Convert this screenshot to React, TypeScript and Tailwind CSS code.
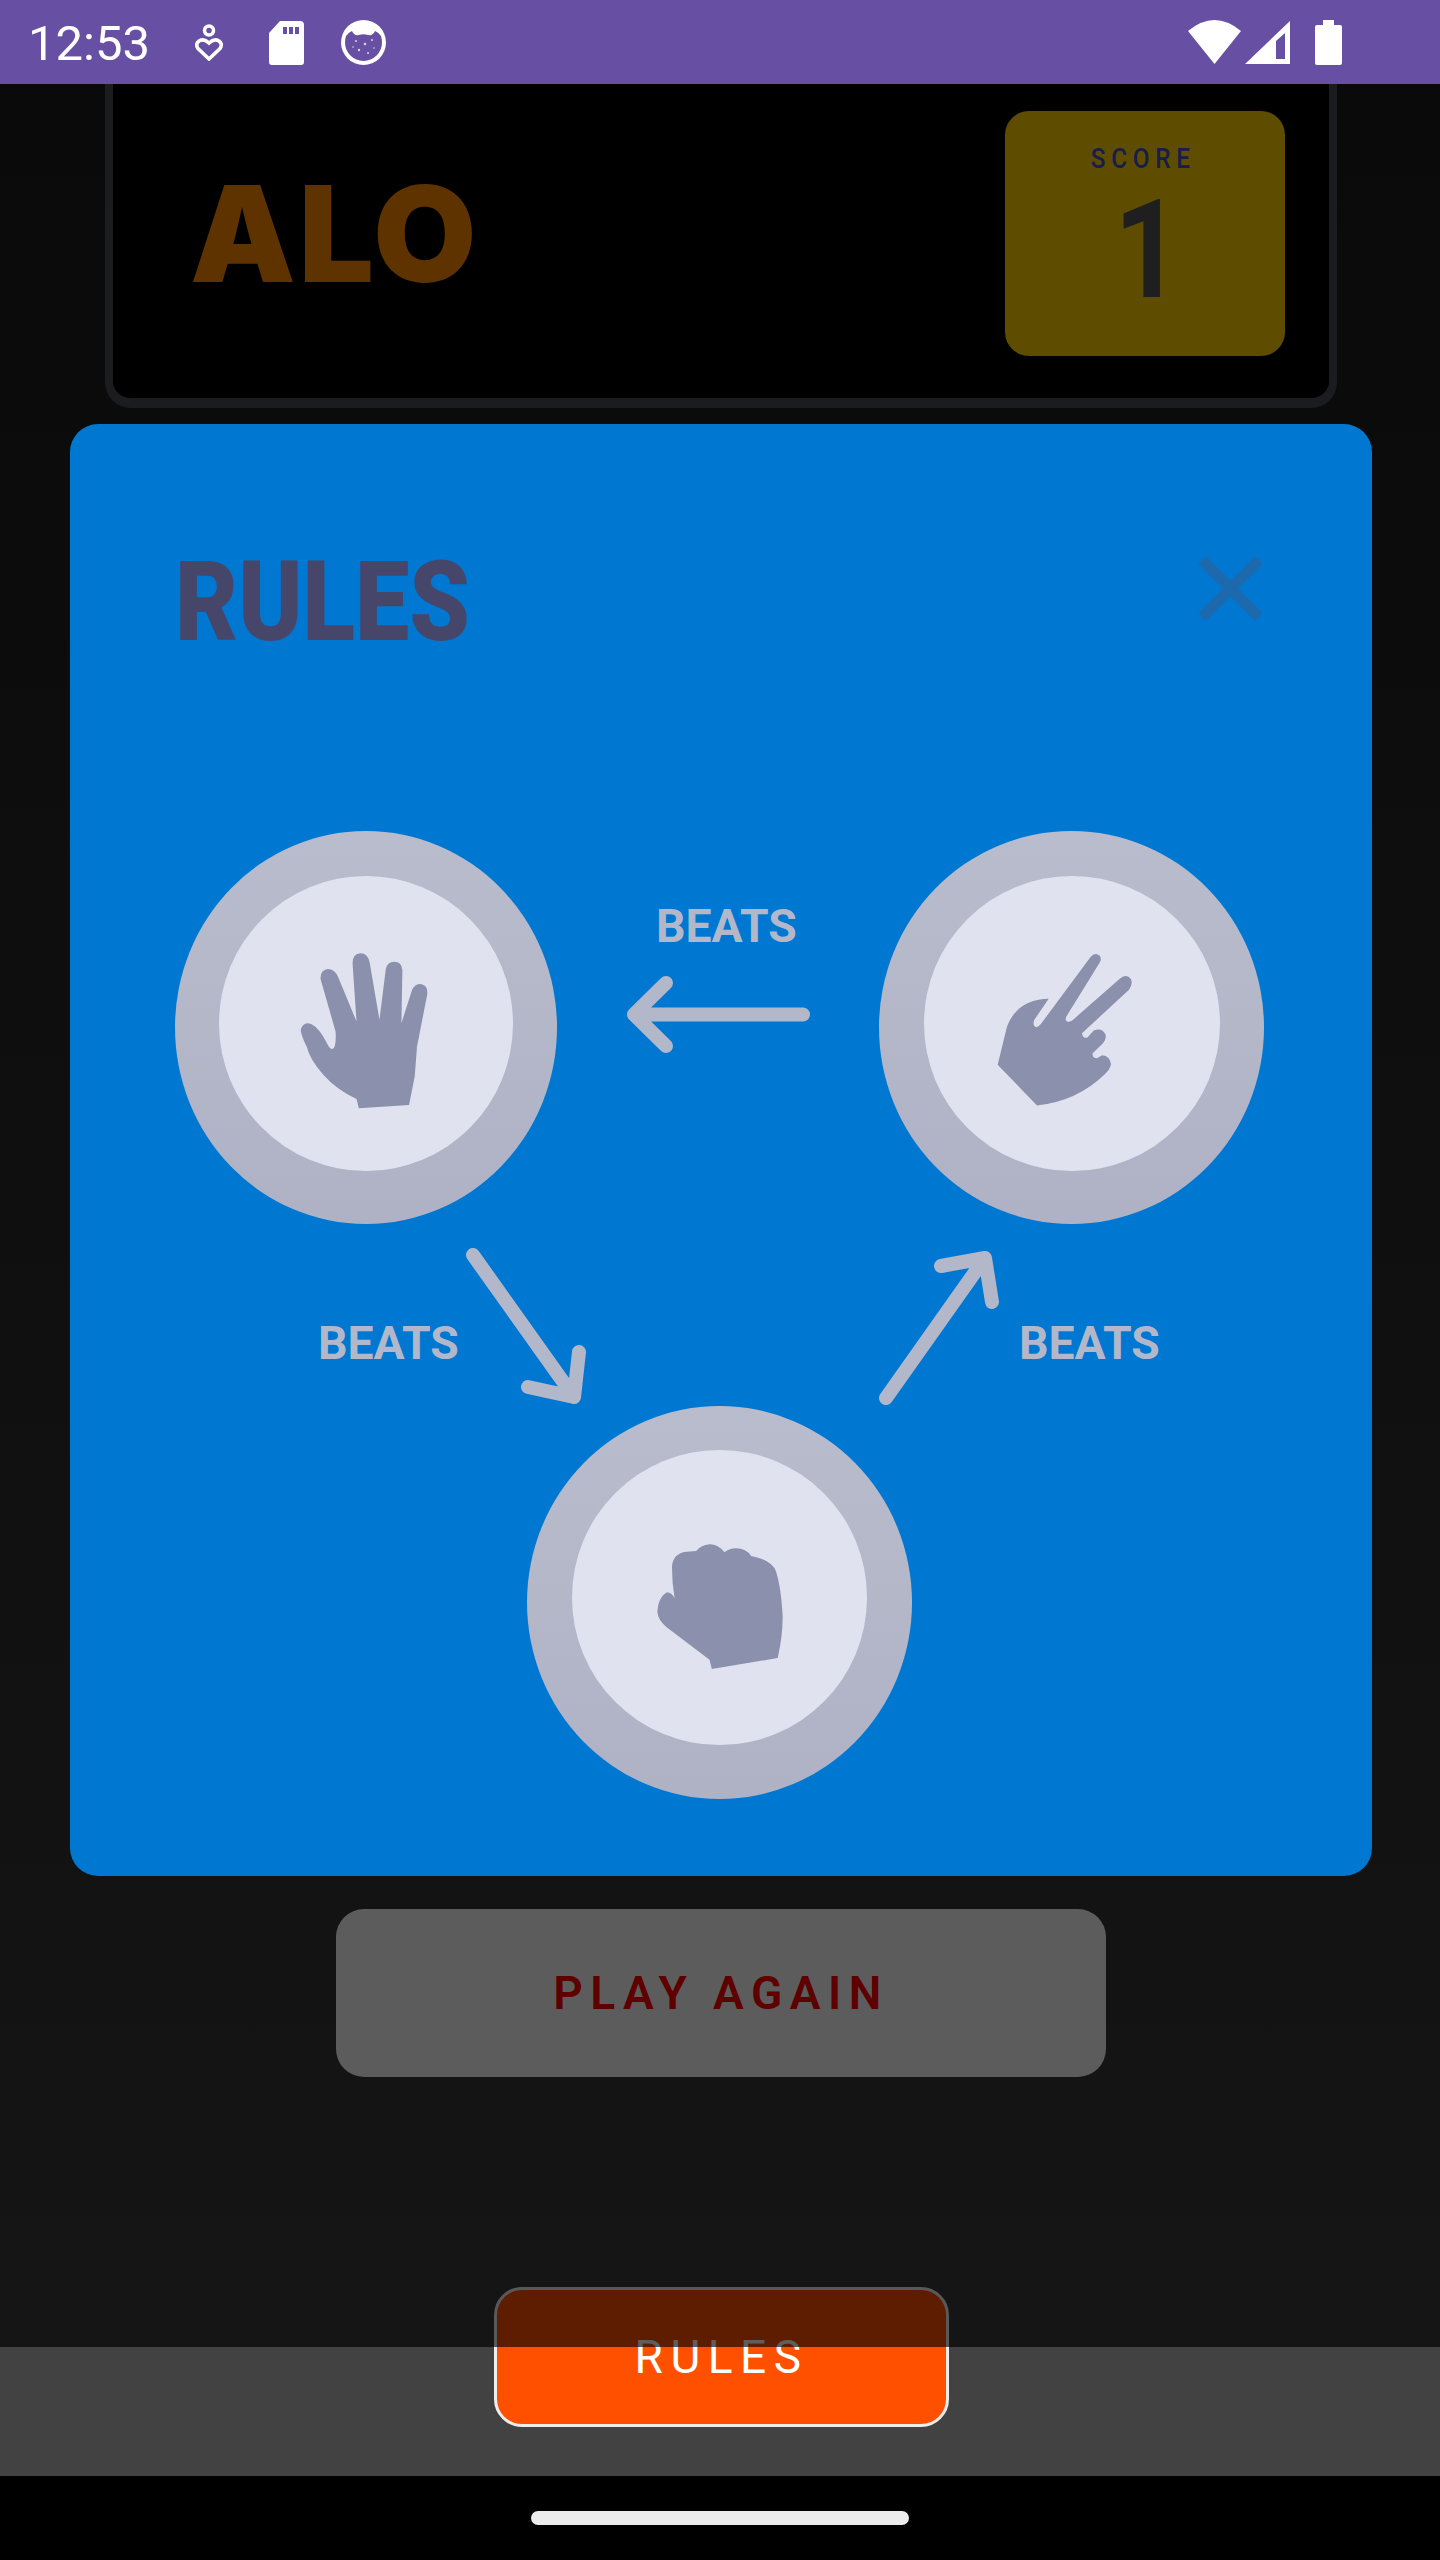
import React from "react";

function PaperIcon() {
  return (
    <svg viewBox="420 400 385 467" className="w-[128px] h-[156px] ml-[-4px] mt-[15px] fill-[#8b90ad]">
      <path d="M597 866 L748 856 L765 770 L772 680 L803 522 Q805 495 783 492 Q765 492 757 510 L725 610 L728 450 Q726 425 703 425 Q682 425 678 448 L659 600 L630 430 Q625 400 602 400 Q578 402 578 430 L590 605 L535 472 Q525 447 503 447 Q480 450 482 478 L527 635 Q530 690 515 688 Q508 685 500 668 Q478 625 455 613 Q430 602 422 630 Q424 650 440 680 Q450 720 490 765 Q530 810 590 838 Z" />
    </svg>
  );
}

function ScissorsIcon() {
  return (
    <svg viewBox="410 400 405 458" className="w-[135px] h-[153px] ml-[-15px] mt-[12px] fill-[#8b90ad]">
      <path d="M530 857 L412 735 L440 620 Q470 540 565 537 L522 600 Q515 618 528 622 Q535 622 542 612 L690 412 Q705 395 718 408 Q726 418 716 432 L618 590 Q612 605 625 606 Q632 606 640 598 L780 475 Q800 460 812 478 Q818 495 806 510 L665 640 Q668 658 682 652 L700 632 Q725 622 736 645 Q738 660 728 670 L697 700 Q695 716 710 715 L725 706 Q750 708 752 735 Q748 750 735 762 Q650 845 530 857 Z" />
    </svg>
  );
}

function RockIcon() {
  return (
    <svg viewBox="443 462 377 376" className="w-[126px] h-[125px] ml-[1px] mt-[17px] fill-[#8b90ad]">
      <path d="M607 838 L805 805 Q820 740 820 680 Q815 590 800 545 Q790 510 725 498 Q710 475 680 475 Q660 475 645 487 Q625 462 600 463 Q575 465 560 483 L530 485 Q490 490 487 530 Q487 580 495 625 Q485 605 470 608 Q445 625 443 665 Q445 690 470 712 L600 810 Z" />
    </svg>
  );
}

function Token({ children, className }: { children: React.ReactNode; className: string }) {
  return (
    <div className={`rounded-[50%] bg-gradient-to-b from-[#b9bccc] to-[#afb2c5] ${className}`}>
      <div className="w-full h-full rounded-[50%] bg-[#e0e3ef] flex items-center justify-center">{children}</div>
    </div>
  );
}

function Beats({ className }: { className: string }) {
  return (
    <div className={`w-[140px] origin-left scale-x-[0.985] text-[47px] leading-none font-bold whitespace-nowrap text-[#b3b7ca] ${className}`}>BEATS</div>
  );
}

function StatusBar() {
  return (
    <div className="h-[84px] bg-[#6750a3] flex items-center text-white">
      <span className="ml-[28px] mt-[3px] text-[49px] leading-none w-[167px]">12:53</span>
      <svg viewBox="0 0 28 37" className="w-[28px] h-[37px] fill-none stroke-white stroke-[3.5]">
        <circle cx="14" cy="6.5" r="4.5" />
        <path d="M14 35 L3 24.5 Q0 20 4 17 Q9 14 14 19 Q19 14 24 17 Q28 20 25 24.5 Z" />
      </svg>
      <svg viewBox="0 0 35 44" className="w-[35px] h-[44px] ml-[46px] mt-[1px] fill-white">
        <path fillRule="evenodd" d="M11 0 H31 Q35 0 35 4 V41 Q35 44 32 44 H3 Q0 44 0 41 V12 Z M14 6 V13 H18 V6 Z M20 6 V13 H24 V6 Z M26 6 V13 H30 V6 Z" />
      </svg>
      <svg viewBox="0 0 45 45" className="w-[45px] h-[45px] ml-[37px]">
        <circle cx="22.5" cy="22.5" r="22.5" fill="white" />
        <path d="M5 16 Q8 12 11 11 Q13 16 18 15 Q22 13.5 27 15 Q32 16 34 11 Q37 12 40 16 Q41 19 41 22.5 A18.5 18.5 0 0 1 4 22.5 Q4 19 5 16 Z" fill="#6750a3" />
        <g fill="#d9d2ea">
          <circle cx="15" cy="21" r="1" />
          <circle cx="24" cy="24" r="1.3" />
          <circle cx="31" cy="20" r="1" />
          <circle cx="18" cy="30" r="1.2" />
          <circle cx="27" cy="33" r="1" />
          <circle cx="12" cy="27" r="0.8" />
          <circle cx="33" cy="28" r="0.8" />
        </g>
      </svg>
      <div className="ml-auto mr-[98px] flex items-center">
        <svg viewBox="0 0 53 44" className="w-[53px] h-[44px] fill-white">
          <path d="M0 11 Q26.5 -11 53 11 L26.5 44 Z" />
        </svg>
        <svg viewBox="0 0 45 43" className="w-[45px] h-[43px] ml-[4px] fill-white">
          <path fillRule="evenodd" d="M0 43 L45 0 V43 Z M31 20 V38 H40 V12 Z" />
        </svg>
        <svg viewBox="0 0 27 45" className="w-[27px] h-[45px] ml-[25px] fill-white">
          <path d="M8 0 H19 V5 H25 Q27 5 27 7 V43 Q27 45 25 45 H2 Q0 45 0 43 V7 Q0 5 2 5 H8 Z" />
        </svg>
      </div>
    </div>
  );
}

export default function App() {
  return (
    <div className="relative w-[1440px] h-[2560px] overflow-hidden bg-black font-['Roboto',sans-serif]">
      <StatusBar />

      <main className="h-[2263px] bg-gradient-to-b from-[#1c1c1c] to-[#3a3a3a] flex flex-col">
        <section className="ml-[105px] w-[1232px] h-[324px] shrink-0 bg-black border-x-[8px] border-b-[10px] border-[#474c56] rounded-b-[26px] flex justify-between">
          <div className="ml-[77px] mt-[83px] font-['Inter',sans-serif] font-black text-[133px] leading-none tracking-[3px] text-[#ff8c00]">ALO</div>
          <div className="mt-[27px] mr-[44px] w-[280px] h-[245px] rounded-[24px] bg-[#ffd100] flex flex-col items-center pt-[34px]">
            <div className="ml-[-4px] scale-x-[0.87] text-[28px] leading-none font-medium tracking-[6.5px] text-[#4451c0]">SCORE</div>
            <div className="mt-[8px] ml-[6px] scale-x-[0.85] text-[138px] leading-none font-bold text-[#545454]">1</div>
          </div>
        </section>
        <button className="ml-[336px] mt-[1501px] w-[770px] h-[168px] shrink-0 rounded-[28px] bg-[#f9f9f9] text-[46px] font-semibold tracking-[7.5px] text-[#ff0000]">
          PLAY AGAIN
        </button>
      </main>

      <div className="h-[129px] bg-[#424242]" />

      <div className="h-[84px] bg-black flex justify-center pt-[35px]">
        <div className="w-[378px] h-[14px] rounded-full bg-[#ececec]" />
      </div>

      <button className="absolute left-[494px] top-[2287px] w-[455px] h-[140px] rounded-[28px] bg-[#ff5000] border-[3px] border-[#eeeeee] text-[46px] font-normal tracking-[7.5px] text-white">
        RULES
      </button>

      <div className="absolute left-0 top-[84px] w-full h-[2263px] bg-[#000000a1]" />

      <div className="absolute left-[70px] top-[424px] w-[1302px] h-[1452px] rounded-[28px] bg-[#0078d2]">
        <div className="flex justify-between pt-[122px] pl-[105px] pr-[110px]">
          <h1 className="origin-left scale-x-[0.865] text-[112px] leading-none font-black text-[#45466a]">RULES</h1>
          <svg viewBox="0 0 63 65" className="mt-[10px] w-[63px] h-[65px] stroke-[#1c69ae] stroke-[11] fill-none">
            <path d="M3 4 L60 61 M60 4 L3 61" />
          </svg>
        </div>

        <div className="mt-[173px] ml-[105px] flex h-[393px]">
          <Token className="w-[382px] h-[393px] pt-[45px] pb-[53px] px-[44px] shrink-0">
            <PaperIcon />
          </Token>
          <div className="w-[322px] shrink-0 flex flex-col items-start">
            <Beats className="mt-[71px] ml-[99px]" />
            <svg viewBox="620 972 197 84" className="mt-[23px] ml-[63px] w-[197px] h-[84px] fill-none stroke-[#b3b7ca] stroke-[14]" strokeLinecap="round" strokeLinejoin="round">
              <path d="M803 1014.5 H634 M666 983 L634 1014.5 L666 1046" />
            </svg>
          </div>
          <Token className="w-[385px] h-[393px] pt-[45px] pb-[53px] pl-[45px] pr-[44px] shrink-0">
            <ScissorsIcon />
          </Token>
        </div>

        <div className="flex h-[182px] pl-[248px] items-start">
          <Beats className="mt-[95px] shrink-0" />
          <svg viewBox="465 1248 125 157" className="mt-[24px] ml-[7px] w-[125px] h-[157px] shrink-0 fill-none stroke-[#b3b7ca] stroke-[14]" strokeLinecap="round" strokeLinejoin="round">
            <path d="M473 1255 L574 1397 M579 1352 L574 1397 L528 1387" />
          </svg>
          <svg viewBox="878 1248 125 157" className="mt-[24px] ml-[288px] w-[125px] h-[157px] shrink-0 fill-none stroke-[#b3b7ca] stroke-[14]" strokeLinecap="round" strokeLinejoin="round">
            <path d="M886 1398 L985 1258 M941 1266 L985 1258 L992 1302" />
          </svg>
          <Beats className="mt-[95px] ml-[16px] shrink-0" />
        </div>

        <div className="ml-[457px]">
          <Token className="w-[385px] h-[393px] pt-[44px] pb-[54px] px-[45px]">
            <RockIcon />
          </Token>
        </div>
      </div>
    </div>
  );
}
